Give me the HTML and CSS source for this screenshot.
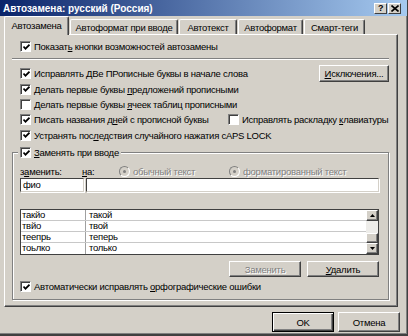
FILE: index.html
```html
<!DOCTYPE html>
<html lang="ru">
<head>
    <meta charset="UTF-8">
    <title>Автозамена: русский (Россия)</title>
    <link rel="stylesheet" href="styles.css">
</head>
<body>
    <div class="window">
        <div class="titlebar">
            <span class="title">Автозамена: русский (Россия)</span>
            <div class="title-buttons">
                <span class="tbtn">?</span>
                <span class="tbtn">
                    <svg width="8" height="7" viewBox="0 0 8 7"><path d="M0.5 0.5l7 6M7.5 0.5l-7 6" stroke="#000" stroke-width="1.6"/></svg>
                </span>
            </div>
        </div>

        <!-- Tabs -->
        <div class="tabs">
            <div class="tab active tab-1">Автозамена</div>
            <div class="tab tab-2">Автоформат при вводе</div>
            <div class="tab tab-3">Автотекст</div>
            <div class="tab tab-4">Автоформат</div>
            <div class="tab tab-5">Смарт-теги</div>
        </div>

        <div class="panel">
            <div class="check top-check">
                <span class="box"><svg width="7" height="7" viewBox="0 0 7 7"><path d="M0.5 2.5l2 2.2 4-4" stroke="#000" stroke-width="1.7" fill="none"/></svg></span>
                <span>Показат<u>ь</u> кнопки возможностей автозамены</span>
            </div>
            <div class="separator"></div>

            <div class="options">
                <div class="row">
                    <div class="check">
                        <span class="box"><svg width="7" height="7" viewBox="0 0 7 7"><path d="M0.5 2.5l2 2.2 4-4" stroke="#000" stroke-width="1.7" fill="none"/></svg></span>
                        <span>Исправлять <u>Д</u>Ве ПРописные буквы в начале слова</span>
                    </div>
                    <button class="btn btn-except"><u>И</u>сключения...</button>
                </div>
                <div class="row">
                    <div class="check">
                        <span class="box"><svg width="7" height="7" viewBox="0 0 7 7"><path d="M0.5 2.5l2 2.2 4-4" stroke="#000" stroke-width="1.7" fill="none"/></svg></span>
                        <span>Делать первые буквы <u>п</u>редложений прописными</span>
                    </div>
                </div>
                <div class="row">
                    <div class="check">
                        <span class="box"></span>
                        <span>Делать первые буквы <u>я</u>чеек таблиц прописными</span>
                    </div>
                </div>
                <div class="row">
                    <div class="check check-days">
                        <span class="box"><svg width="7" height="7" viewBox="0 0 7 7"><path d="M0.5 2.5l2 2.2 4-4" stroke="#000" stroke-width="1.7" fill="none"/></svg></span>
                        <span>Писать названия д<u>н</u>ей с прописной буквы</span>
                    </div>
                    <div class="check">
                        <span class="box"></span>
                        <span>Исправлять раскладку <u>к</u>лавиатуры</span>
                    </div>
                </div>
                <div class="row">
                    <div class="check">
                        <span class="box"><svg width="7" height="7" viewBox="0 0 7 7"><path d="M0.5 2.5l2 2.2 4-4" stroke="#000" stroke-width="1.7" fill="none"/></svg></span>
                        <span>Устранять пос<u>л</u>едствия случайного нажатия cAPS LOCK</span>
                    </div>
                </div>
            </div>

            <!-- Replace as you type -->
            <div class="group">
                <div class="legend check">
                    <span class="box"><svg width="7" height="7" viewBox="0 0 7 7"><path d="M0.5 2.5l2 2.2 4-4" stroke="#000" stroke-width="1.7" fill="none"/></svg></span>
                    <span><u>З</u>аменять при вводе</span>
                </div>

                <div class="labels">
                    <span class="lbl lbl-from">з<u>а</u>менить:</span>
                    <span class="lbl lbl-to"><u>н</u>а:</span>
                    <span class="radio radio-plain"><span class="radio-dot"></span><span>обычный текст</span></span>
                    <span class="radio"><span class="radio-dot"></span><span>форматированный текст</span></span>
                </div>

                <div class="inputs">
                    <div class="field field-from">фио</div>
                    <div class="field field-to"></div>
                </div>

                <div class="list">
                    <div class="list-rows">
                        <div class="list-row"><span class="col-a">такйо</span><span class="col-b">такой</span></div>
                        <div class="list-row"><span class="col-a">твйо</span><span class="col-b">твой</span></div>
                        <div class="list-row"><span class="col-a">теепрь</span><span class="col-b">теперь</span></div>
                        <div class="list-row"><span class="col-a">тоьлко</span><span class="col-b">только</span></div>
                    </div>
                    <div class="scrollbar">
                        <span class="sb-btn"><svg width="5" height="3" viewBox="0 0 5 3"><path d="M2.5 0L5 3H0z" fill="#000"/></svg></span>
                        <span class="sb-track"></span>
                        <span class="sb-thumb"></span>
                        <span class="sb-btn"><svg width="5" height="3" viewBox="0 0 5 3"><path d="M0 0h5L2.5 3z" fill="#000"/></svg></span>
                    </div>
                </div>

                <div class="group-buttons">
                    <button class="btn btn-wide" disabled>Заменить</button>
                    <button class="btn btn-wide"><u>У</u>далить</button>
                </div>

                <div class="check bottom-check">
                    <span class="box"><svg width="7" height="7" viewBox="0 0 7 7"><path d="M0.5 2.5l2 2.2 4-4" stroke="#000" stroke-width="1.7" fill="none"/></svg></span>
                    <span>Автоматически исправлять <u>о</u>рфографические ошибки</span>
                </div>
            </div>
        </div>

        <div class="footer">
            <button class="btn btn-ok default">OK</button>
            <button class="btn btn-cancel">Отмена</button>
        </div>
    </div>
</body>
</html>
```

FILE: styles.css
```css
:root {
    --face: #d4d0c8;
    --shadow: #808080;
    --dark: #404040;
    --light: #ffffff;
}

* {
    margin: 0;
    padding: 0;
    box-sizing: border-box;
}

body {
    width: 408px;
    height: 336px;
    overflow: hidden;
    background: var(--face);
    font-family: 'Liberation Sans', Arial, sans-serif;
    font-size: 9.5px;
    letter-spacing: -0.25px;
    color: #000;
}

.window {
    width: 408px;
    height: 336px;
    background: var(--face);
    border-right: 1px solid var(--dark);
    border-bottom: 2px solid var(--dark);
    box-shadow: inset -1px -1px 0 var(--shadow);
}

/* Title bar */
.titlebar {
    height: 16px;
    display: flex;
    align-items: center;
    justify-content: space-between;
    padding: 0 6px 0 3px;
    background: linear-gradient(to right, #0a246a, #a6caf0);
}

.title {
    color: #fff;
    font-weight: bold;
    font-size: 10px;
    letter-spacing: 0;
}

.title-buttons {
    display: flex;
    gap: 1px;
}

.tbtn {
    width: 13px;
    height: 11px;
    display: flex;
    align-items: center;
    justify-content: center;
    background: var(--face);
    border-top: 1px solid var(--light);
    border-left: 1px solid var(--light);
    border-right: 1px solid var(--dark);
    border-bottom: 1px solid var(--dark);
    font-weight: bold;
    font-size: 9px;
    line-height: 1;
}

/* Tabs */
.tabs {
    height: 18px;
    display: flex;
    align-items: flex-end;
    padding-left: 4px;
}

.tab {
    height: 15px;
    display: flex;
    align-items: center;
    justify-content: center;
    white-space: nowrap;
    background: var(--face);
    border-top: 1px solid var(--light);
    border-left: 1px solid var(--light);
    border-right: 1px solid var(--dark);
    border-radius: 2px 2px 0 0;
    box-shadow: inset -1px 0 0 var(--shadow);
    margin-right: 1px;
}

.tab.active {
    height: 19px;
    margin-bottom: -1px;
    position: relative;
    z-index: 1;
    padding-bottom: 2px;
}

.tab-1 { width: 65px; }
.tab-2 { width: 108px; }
.tab-3 { width: 58px; }
.tab-4 { width: 65px; }
.tab-5 { width: 61px; }

/* Panel */
.panel {
    width: 394px;
    height: 273px;
    margin-left: 4px;
    padding: 0 8px 0 7px;
    border-top: 1px solid var(--light);
    border-left: 1px solid var(--light);
    border-right: 1px solid var(--dark);
    border-bottom: 1px solid var(--dark);
    box-shadow: inset -1px -1px 0 var(--shadow);
}

.check {
    display: flex;
    align-items: center;
    white-space: nowrap;
    height: 13px;
}

.box {
    width: 11px;
    height: 11px;
    flex: none;
    margin-right: 3px;
    display: flex;
    align-items: center;
    justify-content: center;
    background: #fff;
    border-top: 1px solid var(--shadow);
    border-left: 1px solid var(--shadow);
    border-right: 1px solid var(--light);
    border-bottom: 1px solid var(--light);
    box-shadow: inset 1px 1px 0 var(--dark);
}

.box svg {
    margin: 1px 0 0 1px;
}

.top-check {
    margin: 5px 0 0 8px;
}

.separator {
    height: 2px;
    margin-top: 5px;
    border-top: 1px solid var(--shadow);
    border-bottom: 1px solid var(--light);
}

.options {
    margin-top: 6px;
    padding-left: 8px;
}

.row {
    height: 15.4px;
    display: flex;
    align-items: center;
}

.check-days {
    width: 208px;
}

.btn {
    font-family: inherit;
    font-size: 9.5px;
    letter-spacing: -0.25px;
    color: #000;
    background: var(--face);
    border-top: 1px solid var(--light);
    border-left: 1px solid var(--light);
    border-right: 1px solid var(--dark);
    border-bottom: 1px solid var(--dark);
    box-shadow: inset -1px -1px 0 var(--shadow);
}

.btn:disabled {
    color: var(--shadow);
    text-shadow: 1px 1px 0 var(--light);
}

.btn-except {
    width: 70px;
    height: 17px;
    margin-left: auto;
}

/* Group box */
.group {
    margin-top: 9.5px;
    height: 148px;
    padding: 0 9px 0 7px;
    border: 1px solid var(--shadow);
    box-shadow: inset 1px 1px 0 var(--light), 1px 1px 0 var(--light);
}

.legend {
    width: fit-content;
    margin: -7px 0 0 -2px;
    padding: 0 2px;
    background: var(--face);
}

.labels {
    height: 12px;
    margin-top: 6px;
    display: flex;
    align-items: center;
    white-space: nowrap;
}

.lbl-from { width: 62px; }
.lbl-to { width: 37px; }

.radio {
    display: flex;
    align-items: center;
    color: var(--shadow);
    text-shadow: 1px 1px 0 var(--light);
}

.radio-plain { width: 110px; }

.radio-dot {
    width: 11px;
    height: 11px;
    margin-right: 3px;
    border-radius: 50%;
    border: 1px solid var(--shadow);
    border-right-color: var(--light);
    border-bottom-color: var(--light);
    background: var(--face);
    display: flex;
    align-items: center;
    justify-content: center;
}

.radio-dot::after {
    content: '';
    width: 3px;
    height: 3px;
    border-radius: 50%;
    background: var(--shadow);
}

.inputs {
    margin-top: 1px;
    display: flex;
    gap: 2px;
}

.field {
    height: 14px;
    background: #fff;
    border-top: 1px solid var(--dark);
    border-left: 1px solid var(--dark);
    border-right: 1px solid var(--face);
    border-bottom: 1px solid var(--face);
    box-shadow: 1px 1px 0 var(--light);
    padding-left: 2px;
    line-height: 12px;
}

.field-from { width: 64px; }
.field-to { width: 293px; }

/* Replacement list */
.list {
    margin-top: 17px;
    height: 46px;
    display: flex;
    background: #fff;
    border: 1px solid var(--dark);
}

.list-rows {
    flex: 1;
}

.list-row {
    height: 11px;
    display: flex;
    border-bottom: 1px solid #c8c8c8;
    line-height: 10px;
}

.list-row:last-child {
    border-bottom: none;
}

.col-a {
    width: 65px;
    padding-left: 1px;
    border-right: 1px solid #a0a0a0;
}

.col-b {
    padding-left: 3px;
}

.scrollbar {
    width: 12px;
    display: flex;
    flex-direction: column;
    background: #eeedea;
}

.sb-btn,
.sb-thumb {
    height: 11px;
    display: flex;
    align-items: center;
    justify-content: center;
    background: var(--face);
    border-top: 1px solid var(--light);
    border-left: 1px solid var(--light);
    border-right: 1px solid var(--dark);
    border-bottom: 1px solid var(--dark);
    box-shadow: inset -1px -1px 0 var(--shadow);
}

.sb-thumb {
    height: 10px;
}

.sb-track {
    flex: 1;
}

.group-buttons {
    height: 16px;
    margin-top: 6px;
    display: flex;
    justify-content: flex-end;
    gap: 6px;
}

.btn-wide {
    width: 72px;
}

.bottom-check {
    margin-top: 3px;
}

/* Dialog buttons */
.footer {
    display: flex;
    justify-content: flex-end;
    gap: 4px;
    padding: 5px 7px 0 0;
}

.btn-ok,
.btn-cancel {
    width: 62px;
    height: 20px;
}

.btn.default {
    border: 1px solid #000;
    box-shadow: inset 1px 1px 0 var(--light), inset -1px -1px 0 var(--dark), inset -2px -2px 0 var(--shadow);
}
```
